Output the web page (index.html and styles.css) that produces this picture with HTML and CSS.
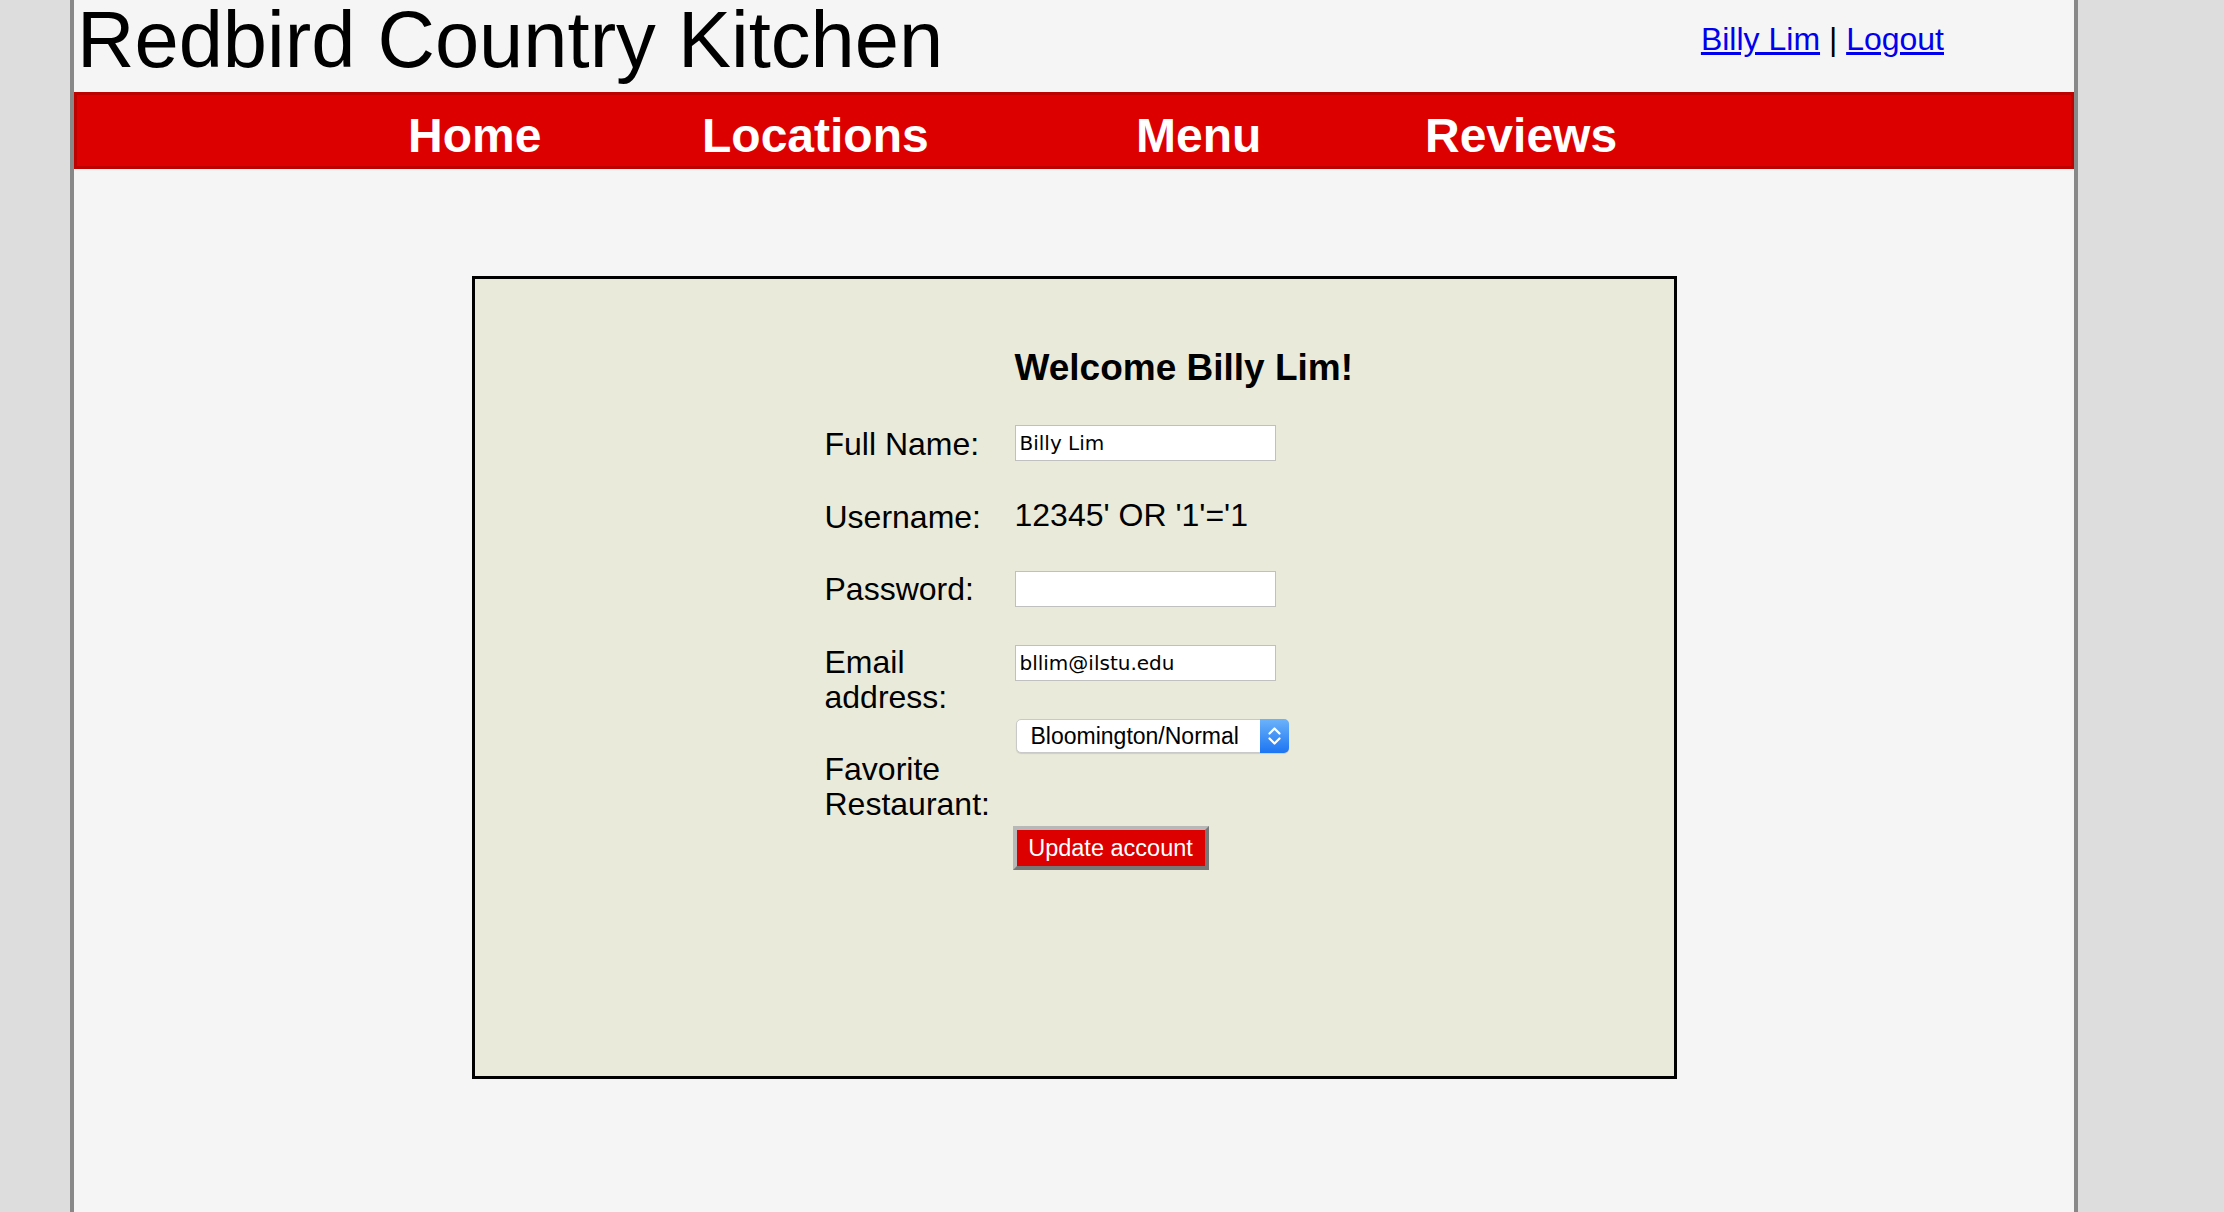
FILE: index.html
```html
<!DOCTYPE html>
<html lang="en">
<head>
<meta charset="utf-8">
<title>Redbird Country Kitchen</title>
<link rel="stylesheet" href="styles.css">
</head>
<body>
<div class="page">
  <header class="header">
    <h1 class="site-title">Redbird Country Kitchen</h1>
    <div class="user-links"><a href="#">Billy Lim</a> | <a href="#">Logout</a></div>
  </header>
  <nav class="nav">
    <ul class="nav-list">
      <li><a href="#">Home</a></li>
      <li><a href="#">Locations</a></li>
      <li><a href="#">Menu</a></li>
      <li><a href="#">Reviews</a></li>
    </ul>
  </nav>
  <main class="account-box">
    <h2 class="welcome">Welcome Billy Lim!</h2>
    <form class="account-form">
      <div class="labels">
        <label class="label" for="fullname">Full Name:</label>
        <span class="label">Username:</span>
        <label class="label" for="password">Password:</label>
        <label class="label" for="email">Email<br>address:</label>
        <label class="label" for="fav">Favorite<br>Restaurant:</label>
      </div>
      <div class="fields">
        <input class="text-input" id="fullname" type="text" value="Billy Lim">
        <span class="username-value">12345' OR '1'='1</span>
        <input class="text-input" id="password" type="password" value="">
        <input class="text-input" id="email" type="text" value="bllim@ilstu.edu">
        <div class="select-wrap">
          <select class="select" id="fav">
            <option>Bloomington/Normal</option>
          </select>
          <span class="stepper">
            <svg width="29" height="34" viewBox="0 0 29 34">
              <path d="M9.5 14.5 L14.5 9.5 L19.5 14.5" fill="none" stroke="#fff" stroke-width="2.2" stroke-linecap="round" stroke-linejoin="round"/>
              <path d="M9.5 19.5 L14.5 24.5 L19.5 19.5" fill="none" stroke="#fff" stroke-width="2.2" stroke-linecap="round" stroke-linejoin="round"/>
            </svg>
          </span>
        </div>
        <button class="update-btn" type="button">Update account</button>
      </div>
    </form>
  </main>
</div>
</body>
</html>
```

FILE: styles.css
```css
html, body {
  margin: 0;
  padding: 0;
}

body {
  background: #dddddd;
  font-family: "Liberation Sans", Arial, sans-serif;
  color: #000;
}

.page {
  margin-left: 70px;
  width: 2000px;
  min-height: 1212px;
  background: #f5f5f5;
  border-left: 4px solid #888888;
  border-right: 4px solid #888888;
}

.header {
  height: 92px;
  display: flex;
  justify-content: space-between;
  align-items: flex-start;
}

.site-title {
  margin: 0 0 0 3px;
  font-size: 79.5px;
  line-height: 80px;
  font-weight: normal;
  white-space: nowrap;
}

.user-links {
  margin: 21px 130px 0 0;
  font-size: 32px;
  line-height: 36px;
  white-space: nowrap;
}

.user-links a {
  color: #0000ee;
}

.nav {
  background: #dd0000;
  border: 3px solid #bd0000;
  padding: 13px 0 3px 0;
}

.nav-list {
  list-style: none;
  margin: 0;
  padding: 0 0 0 331px;
  display: grid;
  grid-template-columns: 294px 434px 289px auto;
}

.nav-list a {
  color: #ffffff;
  text-decoration: none;
  font-weight: bold;
  font-size: 48px;
  line-height: 55px;
  display: block;
  white-space: nowrap;
}

.account-box {
  box-sizing: border-box;
  width: 1205px;
  height: 803px;
  margin: 107px auto 0 auto;
  background: #eaeada;
  border: 3px solid #000;
  padding-top: 68px;
}

.welcome {
  margin: 0 0 0 540px;
  font-size: 37px;
  line-height: 42px;
  font-weight: bold;
}

.account-form {
  display: flex;
  align-items: flex-start;
  margin-top: 36px;
  padding-left: 350px;
}

.labels {
  width: 190px;
  display: flex;
  flex-direction: column;
  gap: 37.5px;
  padding-top: 2px;
}

.label {
  font-size: 32px;
  line-height: 35px;
  display: block;
}

.fields {
  display: flex;
  flex-direction: column;
  align-items: flex-start;
  gap: 38px;
}

.text-input {
  box-sizing: border-box;
  width: 261px;
  height: 36px;
  margin: 0;
  padding: 0 4px;
  border: 1px solid #c0c0c0;
  background: #ffffff;
  font-family: "DejaVu Sans", sans-serif;
  font-size: 20px;
  color: #000;
  outline: none;
}

.username-value {
  margin-top: -1px;
  font-size: 32px;
  line-height: 35px;
  white-space: nowrap;
}

.select-wrap {
  position: relative;
  width: 273px;
  height: 34px;
  margin-left: 1px;
}

.select {
  -webkit-appearance: none;
  appearance: none;
  box-sizing: border-box;
  width: 273px;
  height: 34px;
  margin: 0;
  padding: 0 0 0 14px;
  border: 1px solid #c9c9c9;
  border-radius: 5px;
  background: #ffffff;
  box-shadow: 0 1px 1px rgba(0, 0, 0, 0.12);
  font-family: "Liberation Sans", Arial, sans-serif;
  font-size: 23px;
  color: #000;
}

.stepper {
  position: absolute;
  top: 0;
  right: 0;
  width: 29px;
  height: 34px;
  border-radius: 0 5px 5px 0;
  background: linear-gradient(#6cb3fa, #1c75f2);
  display: block;
}

.stepper svg {
  display: block;
}

.update-btn {
  box-sizing: border-box;
  width: 196px;
  height: 44px;
  margin: 35px 0 0 -2px;
  padding: 0;
  background: #dd0000;
  color: #ffffff;
  font-family: "Liberation Sans", Arial, sans-serif;
  font-size: 23.5px;
  border-style: solid;
  border-width: 4px;
  border-color: #b8b8b8 #777777 #777777 #b8b8b8;
  cursor: pointer;
}
```
